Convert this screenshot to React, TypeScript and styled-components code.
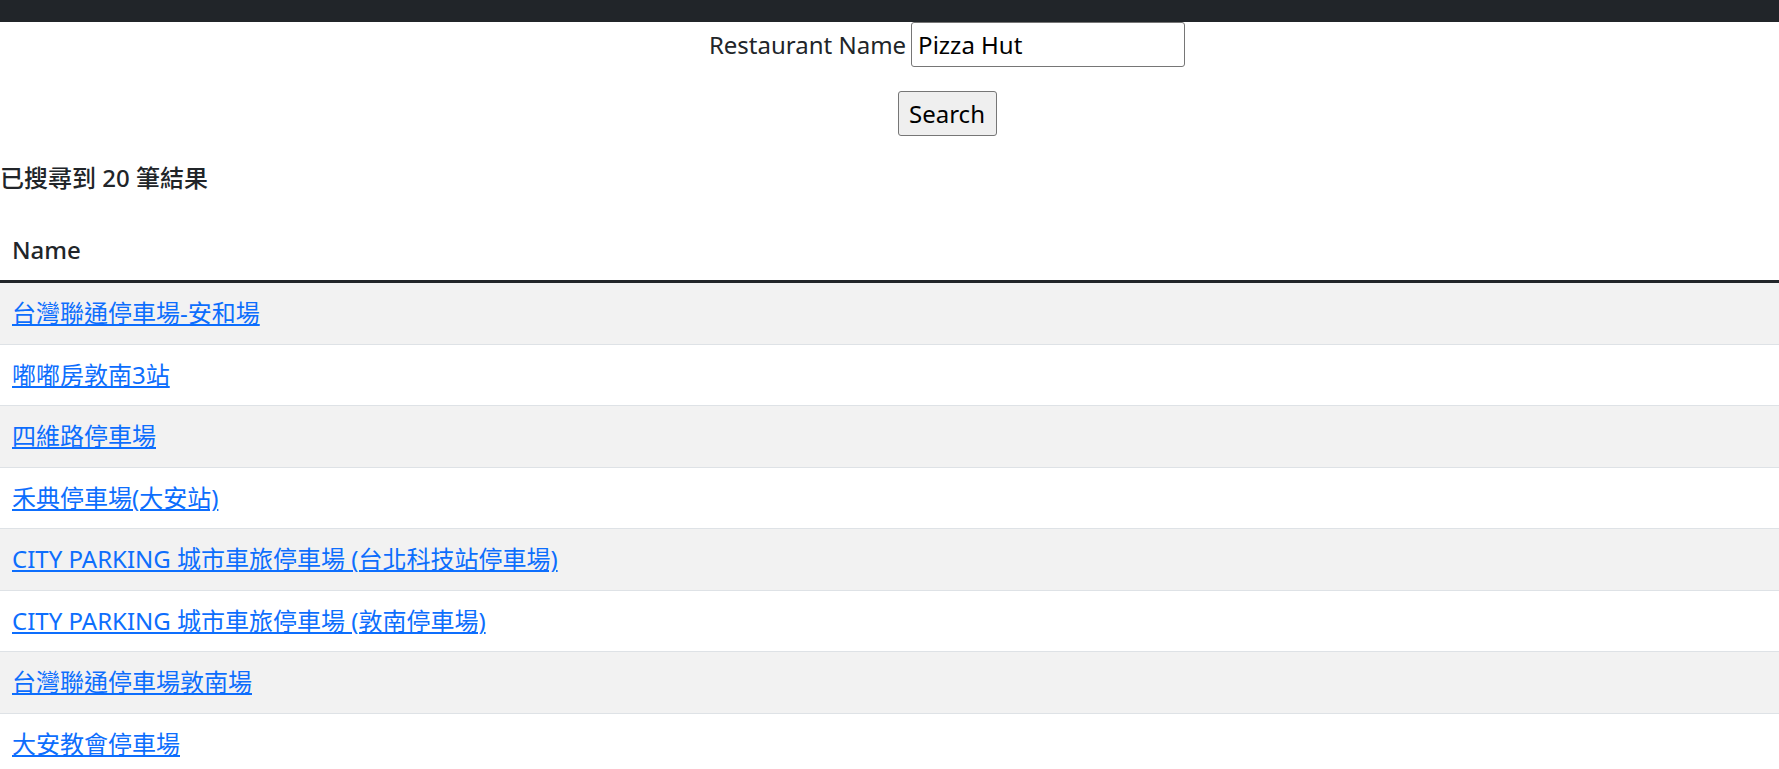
import React from "react";
import styled, { createGlobalStyle } from "styled-components";

const GlobalStyle = createGlobalStyle`
  html, body {
    margin: 0;
    padding: 0;
    background: #ffffff;
  }
  body {
    font-family: "Noto Sans", "Noto Sans CJK TC", sans-serif;
    font-size: 24px;
    line-height: 1.5;
    color: #212529;
  }
  * { box-sizing: border-box; }
`;

const Navbar = styled.nav`
  height: 22px;
  background: #212529;
`;

const SearchForm = styled.form`
  display: flex;
  flex-direction: column;
  align-items: center;
  gap: 24px;
  padding-left: 115px;
`;

const Field = styled.div`
  display: flex;
  align-items: baseline;
  gap: 5px;
`;

const Label = styled.label`
  font-size: 24px;
  color: #212529;
`;

const TextInput = styled.input`
  width: 274px;
  height: 45px;
  padding: 0 6px;
  font: inherit;
  font-size: 24px;
  color: #000;
  border: 1px solid #767676;
  border-radius: 3px;
  background: #fff;
  outline: none;
`;

const Button = styled.button`
  width: 99px;
  height: 45px;
  padding: 0;
  font: inherit;
  font-size: 24px;
  color: #000;
  background: #efefef;
  border: 1px solid #767676;
  border-radius: 3px;
`;

const ResultCount = styled.p`
  margin: 24px 0;
  font-weight: 500;
  line-height: 36px;
`;

const Table = styled.table`
  width: 100%;
  border-collapse: collapse;
`;

const HeadCell = styled.th`
  padding: 12px;
  text-align: left;
  font-weight: 500;
  line-height: 36px;
  border-bottom: 3px solid #212529;
`;

const Row = styled.tr<{ $striped: boolean }>`
  background: ${(p) => (p.$striped ? "#f2f2f2" : "#ffffff")};
`;

const Cell = styled.td`
  padding: 12px;
  line-height: 36.5px;
  border-bottom: 1px solid #dee2e6;
`;

const Link = styled.a`
  color: #0d6efd;
  text-decoration: underline;
  text-decoration-thickness: 2px;
  text-underline-offset: 2px;
`;

const names = [
  "台灣聯通停車場-安和場",
  "嘟嘟房敦南3站",
  "四維路停車場",
  "禾典停車場(大安站)",
  "CITY PARKING 城市車旅停車場 (台北科技站停車場)",
  "CITY PARKING 城市車旅停車場 (敦南停車場)",
  "台灣聯通停車場敦南場",
  "大安教會停車場",
];

export default function App() {
  return (
    <>
      <GlobalStyle />
      <Navbar />
      <SearchForm onSubmit={(e) => e.preventDefault()}>
        <Field>
          <Label htmlFor="rname">Restaurant Name</Label>
          <TextInput id="rname" type="text" defaultValue="Pizza Hut" />
        </Field>
        <Button type="submit">Search</Button>
      </SearchForm>
      <ResultCount>已搜尋到 20 筆結果</ResultCount>
      <Table>
        <thead>
          <tr>
            <HeadCell>Name</HeadCell>
          </tr>
        </thead>
        <tbody>
          {names.map((n, i) => (
            <Row key={i} $striped={i % 2 === 0}>
              <Cell>
                <Link href="#">{n}</Link>
              </Cell>
            </Row>
          ))}
        </tbody>
      </Table>
    </>
  );
}
